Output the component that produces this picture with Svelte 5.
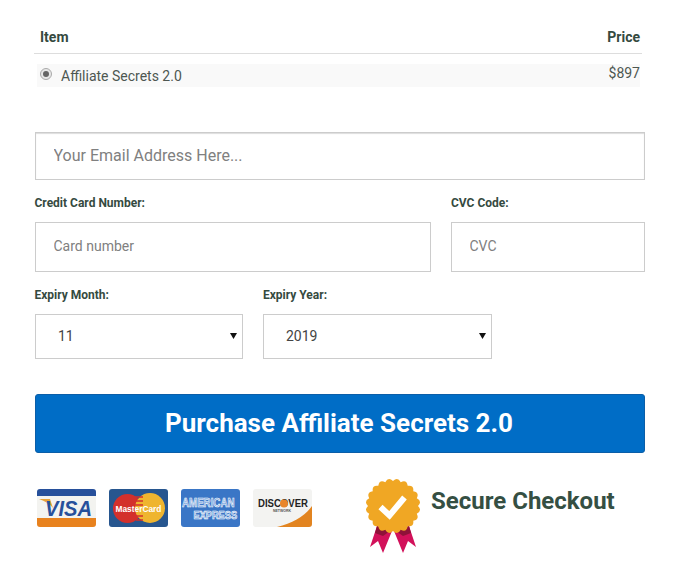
<script>
	let email = $state('');
	let month = $state('11');
	let year = $state('2019');
	const months = ['1','2','3','4','5','6','7','8','9','10','11','12'];
	const years = ['2019','2020','2021','2022','2023','2024'];

	// scalloped seal outline for the badge
	function seal(cx, cy, inner, outer, n) {
		let d = '';
		for (let i = 0; i < n; i++) {
			const a0 = (i / n) * Math.PI * 2 - Math.PI / 2;
			const a1 = ((i + 0.5) / n) * Math.PI * 2 - Math.PI / 2;
			const a2 = ((i + 1) / n) * Math.PI * 2 - Math.PI / 2;
			const p = (r, a) => `${(cx + r * Math.cos(a)).toFixed(2)} ${(cy + r * Math.sin(a)).toFixed(2)}`;
			if (i === 0) d += `M${p(inner, a0)}`;
			d += `Q${p(outer, a1)} ${p(inner, a2)}`;
		}
		return d + 'z';
	}
	const sealPath = seal(28, 28, 25, 30, 20);
</script>

<div class="page">
	<div class="order">
		<div class="order-head">
			<span>Item</span>
			<span>Price</span>
		</div>
		<div class="order-row">
			<label class="item">
				<span class="radio"><span class="dot"></span></span>
				Affiliate Secrets 2.0
			</label>
			<span class="price">$897</span>
		</div>
	</div>

	<input class="field email" type="email" placeholder="Your Email Address Here..." bind:value={email} />

	<div class="row card-row">
		<div class="col grow">
			<span class="lbl">Credit Card Number:</span>
			<input class="field" type="text" placeholder="Card number" />
		</div>
		<div class="col cvc">
			<span class="lbl">CVC Code:</span>
			<input class="field" type="text" placeholder="CVC" />
		</div>
	</div>

	<div class="row expiry-row">
		<div class="col month">
			<span class="lbl">Expiry Month:</span>
			<div class="select-wrap">
				<select bind:value={month}>
					{#each months as m}<option>{m}</option>{/each}
				</select>
				<svg class="caret" width="7" height="7" viewBox="0 0 7 7"><polygon points="0,1 7,1 3.5,7" fill="#111" /></svg>
			</div>
		</div>
		<div class="col year">
			<span class="lbl">Expiry Year:</span>
			<div class="select-wrap">
				<select bind:value={year}>
					{#each years as y}<option>{y}</option>{/each}
				</select>
				<svg class="caret" width="7" height="7" viewBox="0 0 7 7"><polygon points="0,1 7,1 3.5,7" fill="#111" /></svg>
			</div>
		</div>
	</div>

	<button class="buy" type="button">Purchase Affiliate Secrets 2.0</button>

	<div class="trust">
		<div class="cards">
			<!-- Visa -->
			<svg width="59" height="38" viewBox="0 0 59 38">
				<rect width="59" height="38" rx="3" fill="#f3f3f0" />
				<path d="M0 7V3a3 3 0 0 1 3-3h53a3 3 0 0 1 3 3v4z" fill="#27509b" />
				<path d="M0 29h59v6a3 3 0 0 1-3 3H3a3 3 0 0 1-3-3z" fill="#e8821e" />
				<path d="M2 10h11l3 9C13 15 8 12 2 10z" fill="#e8a33a" />
				<text x="8" y="27" class="visa" textLength="47" lengthAdjust="spacingAndGlyphs">VISA</text>
			</svg>
			<!-- Mastercard -->
			<svg width="59" height="38" viewBox="0 0 59 38">
				<rect width="59" height="38" rx="3" fill="#27568f" />
				<circle cx="18.500" cy="19.500" r="14.500" fill="#d3302c" />
				<circle cx="41" cy="19" r="15" fill="#efb52f" />
				<path d="M26 8h8M25 12h9M25 16h9M25 27h9M27 31h7" stroke="#d3302c" stroke-width="1.500" />
				<text transform="translate(6.500 23) scale(.88 1)" class="mc">MasterCard</text>
			</svg>
			<!-- Amex -->
			<svg width="59" height="38" viewBox="0 0 59 38">
				<rect width="59" height="38" rx="3" fill="#3a76c6" />
				<text transform="translate(1 18) scale(.78 1)" class="amex">AMERICAN</text>
				<text transform="translate(12.500 30) scale(.88 1)" class="amex small">EXPRESS</text>
			</svg>
			<!-- Discover -->
			<svg width="59" height="38" viewBox="0 0 59 38">
				<rect width="59" height="38" rx="3" fill="#f3f3f1" />
				<path d="M24 38C40 34 52 27 59 17V35a3 3 0 0 1-3 3z" fill="#e28420" />
				<text x="5" y="18" class="disc" textLength="50" lengthAdjust="spacingAndGlyphs">DISCOVER</text>
				<circle cx="31" cy="14.500" r="4" fill="#e8862a" />
				<text x="29" y="22.500" text-anchor="middle" class="net">NETWORK</text>
			</svg>
		</div>

		<div class="secure">
			<svg class="badge" width="56" height="76" viewBox="0 0 56 76">
				<path d="M12 48 5 69l8-6 5 12 9-22z" fill="#d2115a" />
				<path d="M44 48l7 21-8-6-5 12-9-22z" fill="#d2115a" />
				<path d="M12 48l-2 7 8 3 7-5z" fill="#8e1238" />
				<path d="M44 48l2 7-8 3-7-5z" fill="#8e1238" />
				<path d={sealPath} fill="#f0a724" />
				<path d="M15.500 29l9 8.500 15-18" fill="none" stroke="#fff" stroke-width="6" />
			</svg>
			<span class="secure-text">Secure Checkout</span>
		</div>
	</div>
</div>

<style>
	:global(body) {
		margin: 0;
		background: #fff;
		font-family: Roboto, "Liberation Sans", sans-serif;
	}

	.page {
		width: 610px;
		height: 572px;
		padding: 0 0 0 35px;
		box-sizing: content-box;
		overflow: hidden;
		color: #354a3f;
	}

	.order {
		width: 608px;
		margin-left: -1px;
		padding-top: 28px;
	}

	.order-head {
		display: flex;
		justify-content: space-between;
		padding: 0 2px 0 6px;
		height: 25px;
		line-height: 18px;
		font-size: 14px;
		font-weight: 700;
		border-bottom: 1px solid #ddd;
	}

	.order-row {
		display: flex;
		justify-content: space-between;
		margin: 10px 2px 0 3px;
		height: 23px;
		background: #f9f9f9;
		font-size: 14px;
		color: #4d5751;
	}

	.item {
		display: flex;
		align-items: center;
		gap: 9px;
		line-height: 23px;
		padding-top: 1px;
	}

	.radio {
		width: 10px;
		height: 10px;
		border: 1px solid #aaa;
		border-radius: 50%;
		background: #e8e8e8;
		display: flex;
		align-items: center;
		justify-content: center;
		margin-left: 3px;
		margin-top: -4px;
	}

	.dot {
		width: 6px;
		height: 6px;
		border-radius: 50%;
		background: #666;
	}

	.price {
		line-height: 18px;
	}

	.field {
		display: block;
		width: 100%;
		box-sizing: border-box;
		background: #fff;
		border: 1px solid #ccc;
		border-radius: 0;
		outline: none;
		padding: 0 17.500px 2px;
		height: 50px;
		font: 14px Roboto, sans-serif;
		color: #444;
	}

	.field::placeholder {
		color: #808080;
		opacity: 1;
	}

	.email {
		margin-top: 45px;
		height: 48px;
		font-size: 16px;
		box-shadow: inset 0 1px 1px #ddd;
	}

	.row {
		display: flex;
	}

	.col {
		display: flex;
		flex-direction: column;
	}

	.lbl {
		font-size: 12px;
		font-weight: 700;
		line-height: 14px;
		margin-bottom: 12px;
	}

	.grow .lbl,
	.month .lbl {
		margin-left: -0.500px;
	}

	.card-row {
		margin-top: 16px;
		gap: 20px;
	}

	.grow {
		flex: 1;
	}

	.cvc {
		width: 194px;
	}

	.expiry-row {
		margin-top: 16px;
		gap: 20px;
	}

	.month {
		width: 208px;
	}

	.year {
		width: 229px;
	}

	.select-wrap {
		position: relative;
	}

	select {
		display: block;
		appearance: none;
		width: 100%;
		height: 45px;
		box-sizing: border-box;
		border: 1px solid #ccc;
		border-radius: 0;
		background: #fff;
		padding: 0 22px 1px;
		font: 14px Roboto, sans-serif;
		color: #444;
		outline: none;
	}

	.caret {
		position: absolute;
		right: 6px;
		top: 18px;
		pointer-events: none;
	}

	.buy {
		display: block;
		width: 100%;
		height: 59px;
		margin-top: 35px;
		padding: 0 2px 2px 0;
		border: 1px solid #0b5ea8;
		border-radius: 3px;
		background: #006dc6;
		color: #fff;
		font: 700 26px Roboto, sans-serif;
	}

	.trust {
		display: flex;
		margin-top: 25px;
	}

	.cards {
		display: flex;
		gap: 13px;
		margin: 11px 0 0 2px;
		height: 38px;
	}

	.cards svg {
		display: block;
	}

	.cards text {
		font-family: "Liberation Sans", Arial, sans-serif;
		font-weight: 700;
	}

	.cards .visa {
		font-size: 22px;
		font-style: italic;
		fill: #27509b;
	}

	.cards .mc {
		font-size: 9.500px;
		fill: #fff;
	}

	.cards .amex {
		font-size: 12.500px;
		fill: #6d9ddb;
		stroke: #fff;
		stroke-width: .6px;
	}

	.cards .amex.small {
		font-size: 10.500px;
	}

	.cards .disc {
		font-size: 10px;
		fill: #222;
	}

	.cards .net {
		font-size: 3.500px;
		fill: #555;
	}

	.secure {
		display: flex;
		align-items: flex-start;
		margin-left: 53px;
	}

	.badge {
		display: block;
		flex: none;
	}

	.secure-text {
		font-size: 24px;
		font-weight: 700;
		line-height: 28px;
		margin: 9px 0 0 10px;
		color: #354f43;
	}
</style>
